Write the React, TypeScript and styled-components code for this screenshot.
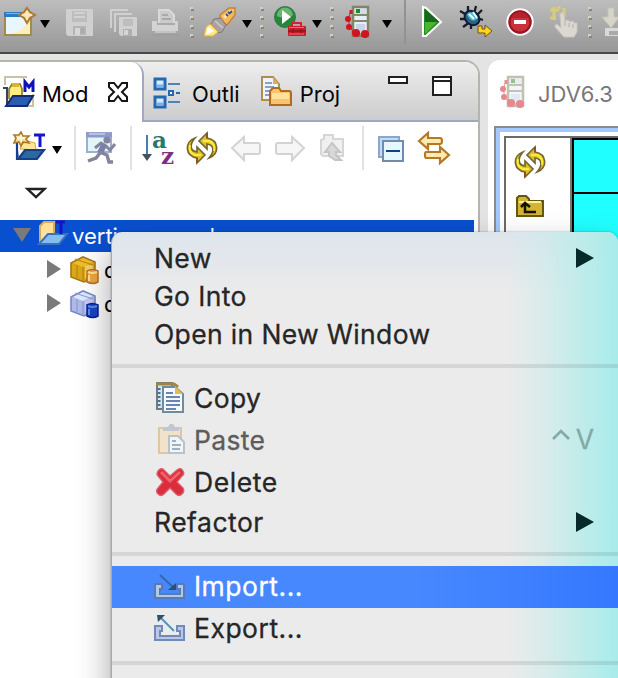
import React from "react";
import styled, { createGlobalStyle } from "styled-components";

const Global = createGlobalStyle`
  * { box-sizing: border-box; }
  body { margin: 0; overflow: hidden; background: #e4e4e4; font-family: Inter, "Liberation Sans", sans-serif; }
  svg { display: block; flex: none; overflow: visible; }
`;

const Window = styled.div`
  position: relative;
  width: 618px;
  height: 678px;
  overflow: hidden;
  display: flex;
  flex-direction: column;
`;

const MainToolbar = styled.div`
  height: 54px;
  flex: none;
  display: flex;
  align-items: flex-start;
  background: linear-gradient(#bdbdbd, #979797);
  border-bottom: 2px solid #484848;
`;

const Slot = styled.div<{ $left?: number; $top?: number }>`
  flex: none;
  margin-left: ${(p) => p.$left ?? 0}px;
  margin-top: ${(p) => p.$top ?? 0}px;
`;

const Divider = styled.div<{ $left: number; $height: number; $color: string }>`
  flex: none;
  width: 2px;
  height: ${(p) => p.$height}px;
  margin-left: ${(p) => p.$left}px;
  background: ${(p) => p.$color};
`;

const Workbench = styled.div`
  flex: 1;
  display: flex;
  gap: 8px;
  padding-top: 6px;
`;

const SidePanel = styled.section`
  width: 480px;
  flex: none;
  background: #fff;
  border: 2px solid #b5b5ae;
  border-left: 0;
  border-radius: 0 15px 0 0;
  overflow: hidden;
`;

const TabStrip = styled.div`
  height: 60px;
  display: flex;
  background: linear-gradient(#eeeeee, #cbcbcb);
  box-shadow: inset 0 -2px #a0a9c1;
`;

const ActiveTab = styled.div`
  width: 144px;
  height: 60px;
  display: flex;
  background: #fff;
  border-right: 2px solid #a0a9c1;
  border-radius: 0 13px 0 0;
`;

const TabLabel = styled.span<{ $left: number; $spacing?: number; $muted?: boolean }>`
  flex: none;
  margin: 19px 0 0 ${(p) => p.$left}px;
  font-size: 22px;
  line-height: 26px;
  letter-spacing: ${(p) => p.$spacing ?? 0}px;
  color: ${(p) => (p.$muted ? "#777" : "#050505")};
`;

const ViewToolbar = styled.div`
  height: 98px;
  display: flex;
  flex-wrap: wrap;
  align-items: flex-start;
  align-content: flex-start;
  padding-top: 4px;
`;

const TreeRow = styled.div<{ $selected?: boolean }>`
  display: flex;
  width: 474px;
  height: ${(p) => (p.$selected ? 32 : 34)}px;
  color: ${(p) => (p.$selected ? "#fff" : "#000")};
  background: ${(p) => (p.$selected ? "#0950d0" : "transparent")};
`;

const TreeLabel = styled.span<{ $left: number; $top: number }>`
  flex: none;
  margin: ${(p) => p.$top}px 0 0 ${(p) => p.$left}px;
  font-size: 22px;
  line-height: 26px;
  white-space: nowrap;
`;

const Editor = styled.section`
  width: 180px;
  flex: none;
  background: #fff;
  border-radius: 12px 0 0 0;
`;

const EditorTab = styled.div`
  height: 66px;
  display: flex;
  padding-top: 2px;
`;

const EditorFocus = styled.div`
  height: 600px;
  margin-left: 6px;
  border: 2px solid #8b8b8b;
  border-right: 0;
  background: #fff;
  box-shadow: inset 4px 4px #a2caff;
  padding: 8px 0 0 8px;
`;

const Canvas = styled.div`
  height: 560px;
  display: flex;
  border: 2px solid #6b6b6b;
  border-right: 0;
`;

const Palette = styled.div`
  width: 66px;
  border-right: 2px solid #777;
  padding: 8px 0 0 8px;
  display: flex;
  flex-direction: column;
  gap: 16px;
`;

const Diagram = styled.div`
  flex: 1;
  border: 2px solid #000;
  border-right: 0;
  background: #20ffff;
`;

const DiagramHeader = styled.div`
  height: 54px;
  border-bottom: 2px solid #000;
`;

const Menu = styled.nav`
  position: absolute;
  left: 111px;
  top: 232px;
  width: 507px;
  height: 470px;
  padding-top: 7px;
  border-left: 1px solid #a5a9ad;
  border-radius: 11px 11px 0 0;
  background:
    linear-gradient(90deg, rgba(168, 236, 235, 0) 395px, rgba(200, 236, 235, 0.5) 432px, rgba(184, 236, 234, 0.94) 476px, #a6eceb 507px),
    linear-gradient(#dde5ec, #ebebeb 62px);
  box-shadow: 0 0 2px rgba(0, 0, 0, 0.35), 0 16px 34px rgba(0, 0, 0, 0.36);
`;

const MenuRow = styled.div<{ $icon?: boolean; $active?: boolean; $disabled?: boolean }>`
  display: flex;
  align-items: center;
  height: ${(p) => (p.$icon ? 42 : 38)}px;
  padding: 0 24px 0 42px;
  font-size: 26.5px;
  line-height: 38px;
  -webkit-text-stroke: 0.3px currentColor;
  color: ${(p) => (p.$active ? "#fff" : p.$disabled ? "#5c5c5c" : "#262626")};
  background: ${(p) => (p.$active ? "linear-gradient(90deg, #4788ff 60%, #3578ff)" : "transparent")};
`;

const MenuLabel = styled.span<{ $spacing?: number; $raise?: boolean }>`
  flex: 1;
  letter-spacing: ${(p) => p.$spacing ?? 0.35}px;
  white-space: nowrap;
  padding-bottom: ${(p) => (p.$raise ? 2 : 0)}px;
`;

const MenuIcon = styled.span`
  width: 40px;
  height: 32px;
  flex: none;
`;

const MenuRule = styled.div<{ $first?: boolean }>`
  height: 4px;
  margin: ${(p) => (p.$first ? "11px 0 9px" : "11px 0 10px")};
  background: rgba(0, 0, 0, 0.085);
`;

const Shortcut = styled.span`
  display: flex;
  gap: 6px;
  align-items: center;
  padding-bottom: 2px;
  color: #80a9a8;
`;

type G = { w?: number; h?: number; children: React.ReactNode };
const Glyph = ({ w = 32, h = 32, children }: G) => (
  <svg width={w} height={h} viewBox={`0 0 ${w} ${h}`} fill="none">{children}</svg>
);

const Caret = () => <Glyph w={10} h={8}><path d="M0 0h10L5 8z" fill="#000" /></Glyph>;
const Dots = () => (
  <Glyph w={4} h={32}>
    {[0, 9, 18, 27].map((y) => (
      <g key={y}><path d={`M0 ${y}h3v3H0z`} fill="#d5cfbf" /><path d={`M1 ${y + 2}h3v2H1z`} fill="#8b8577" /></g>
    ))}
  </Glyph>
);

const NewIcon = () => (
  <Glyph>
    <rect x="1" y="5" width="26" height="22" fill="#e8f6fd" stroke="#a58a45" strokeWidth="2" />
    <path d="M0 4h22v5H0z" fill="#2f78c4" /><path d="M2 5h18v1H2z" fill="#79b7ea" />
    <path d="M6 26c9-1 16-7 18-15l2 1v14z" fill="#fbeebc" />
    <path d="M23 0l3 4 5 3-5 3-3 5-3-5-5-3 5-3z" fill="#f7dfa5" stroke="#a87a35" strokeWidth="2" />
    <path d="M23 3v9M18 7h10" stroke="#fff1cd" />
  </Glyph>
);
const Floppy = () => (
  <Glyph w={28} h={28}>
    <path d="M0 0h27v27H2l-2-2z" fill="#d0d0d0" />
    <path d="M6 2h15v11H6z" fill="#bdbdbd" /><path d="M8 4h11M8 8h11" stroke="#d2d2d2" strokeWidth="2" />
    <path d="M7 17h13v9H7z" fill="#b4b4b4" /><path d="M9 19h5v7H9z" fill="#d6d6d6" /><path d="M15 19h3v5h-3z" fill="#a9a9a9" />
  </Glyph>
);
const Floppies = () => (
  <Glyph w={28} h={28}>
    <path d="M1 19V1h17M5 23V5h17" stroke="#d0d0d0" strokeWidth="2" />
    <path d="M9 8h18v19H11l-2-2z" fill="#d1d1d1" /><path d="M13 10h10v7H13z" fill="#bebebe" />
    <path d="M13 20h9v7h-9z" fill="#b0b0b0" /><path d="M14 21h4v5h-4z" fill="#d4d4d4" />
  </Glyph>
);
const Printer = () => (
  <Glyph w={28} h={28}>
    <path d="M7 1h10l5 5v9H7z" fill="#cbcbcb" stroke="#d9d9d9" strokeWidth="2" />
    <path d="M10 6h6M10 10h9" stroke="#a9a9a9" strokeWidth="2" />
    <path d="M0 12h5v4h18v-4h3v10H0z" fill="#d3d3d3" /><path d="M5 14h18v2H5z" fill="#aaa" /><path d="M3 22h21v2H3z" fill="#c3c3c3" /><path d="M0 26h27" stroke="#999" />
  </Glyph>
);
const Torch = () => (
  <Glyph>
    <path d="M16 8L25 1l6 0v7L23 18l-7-5z" fill="#f4b85a" stroke="#c98430" strokeWidth="1.5" />
    <path d="M19 9l7-6 4 0-9 9z" fill="#ffdf9f" />
    <path d="M24 5l2 2m-4 0l2 2m4-5l-2 2" stroke="#314f91" strokeWidth="1.8" />
    <path d="M10 12l7-1 5 7-4 7-5 1-7-8z" fill="#aaa0a0" stroke="#81777a" />
    <path d="M11 14l8 7" stroke="#c9c0c0" strokeWidth="2" />
    <path d="M6 17l8 8-5 4H0l2-9z" fill="#ffe984" stroke="#dfb04a" /><path d="M5 20l5 4-6 3H2l1-5z" fill="#fffff2" />
  </Glyph>
);
const RunTools = () => (
  <Glyph>
    <circle cx="11" cy="11" r="10.5" fill="#238839" stroke="#37774d" />
    <path d="M3 10a8 8 0 0116-1c-5 4-9 4-16 1z" fill="#69b66e" />
    <path d="M8 4l9 7-9 7z" fill="#fff" />
    <path d="M18 20v-3h9v3" stroke="#d71f2d" strokeWidth="2" /><rect x="14" y="20" width="18" height="10" rx="1" fill="#cf1929" />
    <path d="M15 21.5h15M15 28h15" stroke="#f27178" /><path d="M14 25h18M19 23v4m8-4v4" stroke="#821a24" strokeWidth="1.6" />
  </Glyph>
);
const Server = ({ faded = false }: { faded?: boolean }) => (
  <Glyph w={28} h={32}>
    <g opacity={faded ? 0.5 : 1}>
      <rect x="8" y="1" width="15" height="29" fill="#e8edf6" stroke="#7d8666" strokeWidth="2.5" />
      <path d="M10 3h11v5H10z" fill="#d2dcec" /><path d="M11 3h4v4h-4z" fill="#198d2a" />
      <path d="M8 9h15M8 15h15" stroke="#838a6c" strokeWidth="2" /><path d="M11 18h9v9h-9z" fill="#c6d3ee" />
      <path d="M7 4C3 8 2 20 8 25s9 2 12 3" stroke="#cf1c28" />
      <path d="M6 4v4" stroke="#cf1c28" strokeWidth="3" />
      {[[3, 13], [4, 21], [11, 27], [20, 28]].map(([x, y]) => <circle key={y} cx={x} cy={y} r={y > 24 ? 4 : 3} fill="#d2141e" />)}
    </g>
  </Glyph>
);
const Play = () => (
  <Glyph w={22} h={32}>
    <path d="M2 1l3 1 15 14-15 14H2z" fill="#238b26" stroke="#fff" strokeWidth="2" />
    <path d="M4 3l14 13H4z" fill="#17671d" /><path d="M4 16h12L4 28z" fill="#46b82a" />
  </Glyph>
);
const Bug = () => (
  <Glyph>
    <path d="M8 0v6M0 5l7 4M0 13h8m-5 8l7-5m1 7v-6M16 0l-2 8m8-4l-6 6m7 4l-6-2" stroke="#151c2c" strokeWidth="2.3" />
    <ellipse cx="12" cy="12" rx="8" ry="6.5" transform="rotate(40 12 12)" fill="#2b6680" stroke="#101b36" strokeWidth="2" />
    <path d="M7 8c4-4 8-1 11 4-5 5-9 2-11-4z" fill="#50b9d0" /><path d="M9 8l5 5M13 6l4 6" stroke="#e6ffff" strokeWidth="2" />
    <path d="M18 20v7h7v4l7-6-7-6v4h-3v-3z" fill="#ffd51b" stroke="#745111" />
  </Glyph>
);
const Stop = () => (
  <Glyph w={28} h={28}><circle cx="14" cy="14" r="12.7" fill="#cc303a" stroke="#fff" strokeWidth="2" />
    <circle cx="14" cy="14" r="10.5" stroke="#971722" strokeWidth="2" /><path d="M5 10c3-7 14-8 18 0" fill="#b7202e" /><rect x="8" y="12" width="12" height="4" fill="#fff" /></Glyph>
);
const Hand = () => (
  <Glyph w={28} h={32}>
    <path d="M4 1v13M0 4h9M0 12h6M9 0v3M14 2v9" stroke="#d8cc7c" strokeWidth="3" />
    <path d="M10 8q2-3 4 0l1 7 3-1 2 2 3-1 1 2 3 0v9l-3 5H14L5 21q0-4 3-2l3 3z" fill="#dad8d0" stroke="#c8c6bd" />
    <path d="M15 15v5m4-3v4m4-3v4" stroke="#b0aea7" />
  </Glyph>
);
const Download = () => (
  <Glyph w={28}><path d="M6 0h6v9h5L9 20 0 9h6z" fill="#d7d4ca" stroke="#c5c1b4" /><path d="M3 20h23v8H3z" fill="#d9d9d5" /><path d="M7 23h16v4H7z" fill="#aaa" /></Glyph>
);

const FolderM = () => (
  <Glyph><path d="M2 8V0h22M30 17v12H7" stroke="#c8c3a0" strokeWidth="2" />
    <path d="M6 22V12l3-5h8l2 5v8" fill="#ffef80" stroke="#8a7632" strokeWidth="1.6" /><path d="M9 6h7v4H9z" fill="#ddb331" />
    <path d="M0 11h4v17" stroke="#34445b" strokeWidth="2" />
    <path d="M3 29l7-10h20l-6 10z" fill="#2b5dae" stroke="#152a74" strokeWidth="2" />
    <path d="M22 15V5l4 5 4-5v10" stroke="#1010b8" strokeWidth="3" /></Glyph>
);
const CloseX = () => <Glyph w={20} h={20}><path d="M1 1h5l4 5 4-5h5v4l-5 5 5 5v4h-5l-4-5-4 5H1v-4l5-5-5-5z" fill="#fff" stroke="#151515" strokeWidth="2" /></Glyph>;
const Outline = () => (
  <Glyph w={28}>
    {[1, 19].map((y) => <g key={y}><rect x="2" y={y} width="10" height="10" fill="#d3ecff" stroke="#2568af" strokeWidth="3" /><path d={`M4 ${y + 7}h6`} stroke="#7daeea" strokeWidth="3" /><path d={`M15 ${y + 5}h12`} stroke="#4a85ba" strokeWidth="2" /></g>)}
    <rect x="16" y="13" width="4" height="4" fill="#fff" stroke="#2568af" strokeWidth="2" /><path d="M23 15h4" stroke="#2568af" strokeWidth="2" />
  </Glyph>
);
const Project = () => (
  <Glyph><path d="M1 1h11l6 7v16H1z" fill="#edf3ff" stroke="#ac914b" strokeWidth="2" /><path d="M12 1v7h6" fill="#d4b155" />
    <path d="M4 7h7M4 11h9M4 15h8M4 19h4" stroke="#8ba1c3" strokeWidth="2" />
    <path d="M9 15l3-3h6l2 3h8q2 0 2 2v12H9z" fill="#f5c66d" stroke="#b4691c" strokeWidth="2" /><path d="M11 17h17v6H11z" fill="#ffe39c" /></Glyph>
);
const Minimize = () => <Glyph w={20} h={8}><rect x="1" y="1" width="18" height="6" fill="#fff" stroke="#202020" strokeWidth="2" /></Glyph>;
const Maximize = () => <Glyph w={20} h={20}><path d="M1 1h18v18H1zM1 5h18" fill="#fff" stroke="#202020" strokeWidth="2" /></Glyph>;

const FolderT = () => (
  <Glyph>
    <path d="M6 17l2-5 6-3 7 2 1 7z" fill="#ffe699" stroke="#d8a536" /><path d="M3 11v16h20l7-9H11l-6 8" fill="#2b6a9c" stroke="#173d90" strokeWidth="2.2" />
    <path d="M7 0l2 4 6 0-3 3 3 4-6-1-2 4-2-4-5 1 2-5-2-3h5z" fill="#f9dfa0" stroke="#a97a2c" strokeWidth="1.6" /><path d="M7 3v7M3 6h8" stroke="#fff6da" strokeWidth="2" />
    <path d="M20 3h11M26 3v12" stroke="#1516c9" strokeWidth="3" />
  </Glyph>
);
const Runner = () => (
  <Glyph><rect x="1" y="1" width="24" height="19" fill="#e1f7f7" stroke="#9eaed2" strokeWidth="2" /><path d="M0 3h26" stroke="#8f9acb" strokeWidth="5" /><path d="M3 2h16" stroke="#dceaff" />
    <circle cx="21" cy="8" r="3.6" fill="#85869c" /><path d="M9 16l6-5 5 3 4 4 5-6" stroke="#83859b" strokeWidth="3" /><path d="M18 13l-4 8" stroke="#7c7cae" strokeWidth="6" /><path d="M14 21l-4 5-8 3m11-9l8 3 2 7h4" stroke="#83859b" strokeWidth="3.4" /></Glyph>
);
const SortBox = styled.div`display: flex; width: 34px; height: 32px;`;
const SortLetters = styled.div`display: flex; flex-direction: column;`;
const SortLabel = styled.span<{ $z?: boolean }>`
  font: 700 23px/16px "DejaVu Serif", serif;
  height: 16px;
  color: ${(p) => (p.$z ? "#7c2e87" : "#267a6c")};
  margin-left: ${(p) => (p.$z ? 9 : 0)}px;
`;
const Sort = () => <SortBox><Glyph w={10}><path d="M5 3v20" stroke="#477dae" strokeWidth="2" /><path d="M0 22h10l-5 7z" fill="#44515e" /></Glyph><SortLetters><SortLabel>a</SortLabel><SortLabel $z>z</SortLabel></SortLetters></SortBox>;
const Sync = () => (
  <Glyph>
    {[0, 180].map((a) => <g key={a} transform={`rotate(${a} 16 16)`}>
      <path d="M13 9l8-8v5c12 2 13 16 2 20 6-7 5-13-2-14v5z" fill="#dcc22c" stroke="#766532" strokeWidth="1.7" />
      <path d="M17 9h6c5 2 6 6 5 10" stroke="#ffed32" strokeWidth="2" /><path d="M21 1v5" stroke="#8e5022" strokeWidth="2" />
    </g>)}
  </Glyph>
);
const Arrow = ({ right = false }: { right?: boolean }) => <Glyph w={30} h={26}><path transform={right ? "matrix(-1 0 0 1 30 0)" : undefined} d="M1 12L13 1v6h14q2 0 2 2v7q0 2-2 2H13v6z" fill="#f6f6f6" stroke="#d3d3d3" strokeWidth="2" /></Glyph>;
const FolderUp = () => <Glyph w={28} h={28}><path d="M1 6l3-1V1h9v4h10v17H3l-2-2z" fill="#f0f0f0" stroke="#d6d6d6" strokeWidth="2" /><path d="M12 9l8 9h-4v3l5 5h-6l-6-4v-4H5z" fill="#d8d8d8" stroke="#c5c5c5" strokeWidth="2" /></Glyph>;
const Collapse = () => <Glyph w={28} h={28}><path d="M1 1h20v20H1z" fill="#b9e1fa" stroke="#91a3c6" strokeWidth="2" /><path d="M5 5h20v20H5z" fill="#e5f8ff" stroke="#7589aa" strokeWidth="2" /><path d="M8 15h14" stroke="#13417b" strokeWidth="2" /></Glyph>;
const LinkArrows = () => <Glyph><path d="M1 9l9-8v5h12q2 0 2 3t-2 3H10v5zM31 23l-9-8v5H8q-1 0-1 3t1 3h14v5z" fill="#ffeab1" stroke="#b47826" strokeWidth="2.2" /></Glyph>;
const ViewMenu = () => <Glyph w={20} h={10}><path d="M1.5 1h17l-8.5 8z" fill="#fff" stroke="#222" strokeWidth="2.4" /></Glyph>;
const TreeFolder = () => <Glyph><path d="M2 23V6l4-4h10v13h6" fill="#ffe19a" stroke="#d8ac5a" strokeWidth="2" /><path d="M1 24l9-10h19l-8 10z" fill="#82bdf4" stroke="#3c70bd" strokeWidth="2" /><path d="M18 2h9M23 2v12" stroke="#1713c7" strokeWidth="3" /></Glyph>;
const Box = ({ blue = false }: { blue?: boolean }) => (
  <Glyph w={30} h={30}>
    <path d="M1 7L13 1l12 5v15l-11 5L1 21z" fill={blue ? "#aebaea" : "#dba916"} stroke={blue ? "#7c88c0" : "#a9751a"} strokeWidth="1.6" />
    <path d="M3 7l10-5 10 4-10 5z" fill={blue ? "#dceaff" : "#edbd2e"} /><path d="M13 11v14M5 3l18 6M7 9v13" stroke={blue ? "#929ed0" : "#bd8818"} strokeWidth="1.3" />
    <path d="M15 10q4-2 8 0v4h-4v8h-4z" fill={blue ? "#cdc6f4" : "#f2cd70"} />
    <path d="M17 15q5-3 11 0v11q-5 3-11 0z" fill={blue ? "#1747c8" : "#eda63f"} stroke={blue ? "#07209b" : "#bb7224"} strokeWidth="1.5" /><path d="M18 16q4 2 9 0M19 19v6" stroke={blue ? "#6089e9" : "#ffe098"} strokeWidth="2" />
  </Glyph>
);
const Expander = ({ open = false }: { open?: boolean }) => <Glyph w={18} h={18}><path d={open ? "M0 1h18L9 15z" : "M1 0l14 9L1 18z"} fill="#7a7a7a" /></Glyph>;
const PaletteFolder = () => <Glyph><path d="M3 9V4l2-2h7l3 3v2h14v15H3z" fill="#d3b433" stroke="#665710" strokeWidth="2" /><path d="M5 8h22" stroke="#fff09a" strokeWidth="2" /><path d="M7 13l4-4 5 4M11 10v8h11" stroke="#171302" strokeWidth="2.5" /></Glyph>;
const Copy = () => <Glyph><path d="M3 1h15v26H3z" fill="#cfe6f5" stroke="#6f7c78" strokeWidth="2" /><path d="M2 2h18l4 3" stroke="#a08440" strokeWidth="3" /><path d="M5 6v18" stroke="#4d7298" strokeWidth="3" strokeDasharray="2 2" /><path d="M9 5h12l8 7v18H9z" fill="#f4faff" stroke="#708b99" strokeWidth="2" /><path d="M21 4l8 8h-8z" fill="#e4bd44" /><path d="M12 11h7M12 15h14M12 19h14M12 23h14M12 27h10" stroke="#6785b0" strokeWidth="2" /></Glyph>;
const Paste = () => <Glyph><g opacity=".65"><path d="M5 4h22v25H5z" fill="#f5dfb7" stroke="#d6b37a" strokeWidth="2" /><path d="M9 7V4l5-1 2-3h3l2 3 4 1v3z" fill="#adb3c0" /><path d="M15 12h9l6 6v11H15z" fill="#f5fbff" stroke="#9aaeb8" strokeWidth="2" /><path d="M18 17h4M18 21h9M18 25h8" stroke="#7891ac" strokeWidth="2" /></g></Glyph>;
const Delete = () => <Glyph><path d="M4 5q3-4 6-1l6 6 7-6q4-3 6 1 2 3-1 5l-5 6 6 6q2 3-1 6-3 3-6 0l-6-6-6 6q-3 3-6 0-3-3 0-6l5-6-5-6q-2-2 0-5z" fill="#dd2c3c" stroke="#d66370" strokeWidth="1.3" /><path d="M7 6l9 9 10-9" stroke="#ee6269" strokeWidth="3" /></Glyph>;
const Tray = ({ out = false }: { out?: boolean }) => <Glyph><path d="M1 13h7v5H6v5h20v-5h-3v-5h7v14H1z" fill={out ? "#b9c7e8" : "#afc9ed"} stroke={out ? "#7389b8" : "#587bb5"} strokeWidth="2" /><path d={out ? "M20 18L7 5" : "M6 4l14 13"} stroke={out ? "#5792bd" : "#3469a4"} strokeWidth="2" /><path d={out ? "M3 2h8l-7 7z" : "M22 19v-7l-8 7z"} fill="#2b5069" /></Glyph>;
const Submenu = () => <Glyph w={18} h={20}><path d="M0 0l18 10L0 20z" fill="#052a29" /></Glyph>;

export default function App() {
  return (
    <Window>
      <Global />
      <MainToolbar>
        <Slot $left={4} $top={8}><NewIcon /></Slot><Slot $left={4} $top={20}><Caret /></Slot>
        <Slot $left={16} $top={9}><Floppy /></Slot><Slot $left={16} $top={9}><Floppies /></Slot><Slot $left={14} $top={9}><Printer /></Slot>
        <Slot $left={10} $top={7}><Dots /></Slot>
        <Slot $left={10} $top={7}><Torch /></Slot><Slot $left={6} $top={20}><Caret /></Slot><Slot $left={8} $top={7}><Dots /></Slot>
        <Slot $left={10} $top={6}><RunTools /></Slot><Slot $left={6} $top={20}><Caret /></Slot><Slot $left={8} $top={7}><Dots /></Slot>
        <Slot $left={11} $top={6}><Server /></Slot><Slot $left={9} $top={20}><Caret /></Slot>
        <Divider $left={12} $height={44} $color="#929292" />
        <Slot $left={15} $top={6}><Play /></Slot><Slot $left={17} $top={6}><Bug /></Slot><Slot $left={14} $top={8}><Stop /></Slot><Slot $left={16} $top={6}><Hand /></Slot>
        <Slot $left={10} $top={7}><Dots /></Slot><Slot $left={10} $top={8}><Download /></Slot>
      </MainToolbar>
      <Workbench>
        <SidePanel>
          <TabStrip>
            <ActiveTab><Slot $left={3} $top={15}><FolderM /></Slot><TabLabel $left={7}>Mod</TabLabel><Slot $left={19} $top={20}><CloseX /></Slot></ActiveTab>
            <Slot $left={9} $top={16}><Outline /></Slot><TabLabel $left={11}>Outli</TabLabel>
            <Slot $left={21} $top={14}><Project /></Slot><TabLabel $left={7}>Proj</TabLabel>
            <Slot $left={48} $top={14}><Minimize /></Slot><Slot $left={24} $top={14}><Maximize /></Slot>
          </TabStrip>
          <ViewToolbar>
            <Slot $left={14} $top={6}><FolderT /></Slot><Slot $left={6} $top={20}><Caret /></Slot><Divider $left={12} $height={44} $color="#e2e2e2" />
            <Slot $left={10} $top={6}><Runner /></Slot><Divider $left={12} $height={44} $color="#e2e2e2" />
            <Slot $left={10} $top={6}><Sort /></Slot><Slot $left={10} $top={6}><Sync /></Slot><Slot $left={13} $top={10}><Arrow /></Slot><Slot $left={14} $top={10}><Arrow right /></Slot>
            <Slot $left={15} $top={8}><FolderUp /></Slot><Divider $left={14} $height={44} $color="#e2e2e2" />
            <Slot $left={14} $top={10}><Collapse /></Slot><Slot $left={12} $top={6}><LinkArrows /></Slot>
            <Slot $left={26} $top={18}><ViewMenu /></Slot>
          </ViewToolbar>
          <TreeRow $selected><Slot $left={13} $top={7}><Expander open /></Slot><Slot $left={7}><TreeFolder /></Slot><TreeLabel $left={2} $top={3}>vertica_saved</TreeLabel></TreeRow>
          <TreeRow><Slot $left={46} $top={8}><Expander /></Slot><Slot $left={6} $top={4}><Box /></Slot><TreeLabel $left={4} $top={5}>data</TreeLabel></TreeRow>
          <TreeRow><Slot $left={46} $top={8}><Expander /></Slot><Slot $left={6} $top={4}><Box blue /></Slot><TreeLabel $left={4} $top={5}>data</TreeLabel></TreeRow>
        </SidePanel>
        <Editor>
          <EditorTab><Slot $left={12} $top={14}><Server faded /></Slot><TabLabel $left={10} $muted>JDV6.3</TabLabel></EditorTab>
          <EditorFocus><Canvas><Palette><Sync /><PaletteFolder /></Palette><Diagram><DiagramHeader /></Diagram></Canvas></EditorFocus>
        </Editor>
      </Workbench>
      <Menu>
        <MenuRow><MenuLabel>New</MenuLabel><Submenu /></MenuRow>
        <MenuRow><MenuLabel>Go Into</MenuLabel></MenuRow>
        <MenuRow><MenuLabel>Open in New Window</MenuLabel></MenuRow>
        <MenuRule $first />
        <MenuRow $icon><MenuIcon><Copy /></MenuIcon><MenuLabel>Copy</MenuLabel></MenuRow>
        <MenuRow $icon $disabled><MenuIcon><Paste /></MenuIcon><MenuLabel>Paste</MenuLabel><Shortcut><Glyph w={18} h={20}><path d="M1 10l8-8 8 8" stroke="#80a9a8" strokeWidth="2.6" /></Glyph>V</Shortcut></MenuRow>
        <MenuRow $icon><MenuIcon><Delete /></MenuIcon><MenuLabel $spacing={0.6}>Delete</MenuLabel></MenuRow>
        <MenuRow><MenuLabel $spacing={0.5}>Refactor</MenuLabel><Submenu /></MenuRow>
        <MenuRule />
        <MenuRow $icon $active><MenuIcon><Tray /></MenuIcon><MenuLabel $spacing={0.5} $raise>Import...</MenuLabel></MenuRow>
        <MenuRow $icon><MenuIcon><Tray out /></MenuIcon><MenuLabel $spacing={0.5} $raise>Export...</MenuLabel></MenuRow>
        <MenuRule />
      </Menu>
    </Window>
  );
}
